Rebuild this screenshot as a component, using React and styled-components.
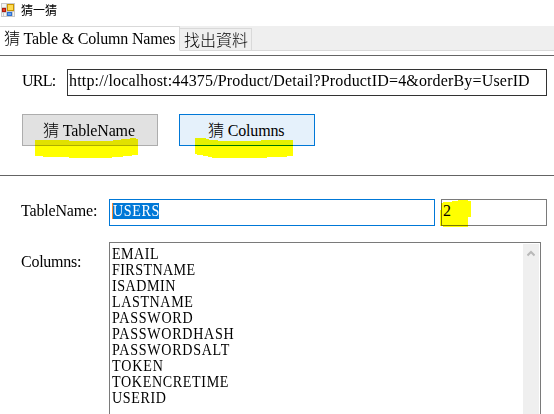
import React from "react";
import styled, { createGlobalStyle } from "styled-components";

const GlobalStyle = createGlobalStyle`
  * { box-sizing: border-box; }
  body { margin: 0; background: #fff; overflow: hidden; }
`;

const Window = styled.main`
  width: 554px;
  height: 414px;
  overflow: hidden;
  display: flex;
  flex-direction: column;
  background: #fff;
  color: #000;
  font: 300 16px/16px "Liberation Serif", "Noto Sans CJK TC", serif;
`;

const TitleBar = styled.header`
  height: 26px;
  flex: none;
  display: flex;
  align-items: flex-start;
  gap: 6px;
  padding: 3px 0 0 1px;
`;

const Title = styled.span`
  font: 400 12px/14px "Noto Sans CJK TC", sans-serif;
`;

const Text = styled.span`
  display: inline-block;
  white-space: pre;
  letter-spacing: ${(p) => p.$track || 0}px;
`;

const Caps = styled(Text)`
  transform: scaleX(0.88);
  transform-origin: left;
`;

const TabStrip = styled.nav`
  height: 25px;
  flex: none;
  display: flex;
  align-items: flex-end;
  background: #efefef;
  border-bottom: 1px solid #d9d9d9;
`;

const Tab = styled.div`
  width: ${(p) => p.$width}px;
  height: ${(p) => (p.$active ? 25 : 23)}px;
  margin-bottom: -1px;
  padding: 4px 0 0 4px;
  border: 1px solid #d9d9d9;
  border-left: 0;
  border-bottom-color: ${(p) => (p.$active ? "#fff" : "#d9d9d9")};
  background: ${(p) => (p.$active ? "#fff" : "#efefef")};
`;

const Section = styled.section`
  flex: none;
  height: ${(p) => p.$height}px;
  margin-top: ${(p) => p.$gap || 0}px;
  border-top: 1px solid #646464;
  padding: ${(p) => p.$pad};
`;

const Field = styled.div`
  display: flex;
  align-items: flex-start;
  margin-bottom: ${(p) => p.$after || 0}px;
`;

const Label = styled.label`
  width: ${(p) => p.$width}px;
  flex: none;
  padding-top: ${(p) => p.$top}px;
`;

const Input = styled.div`
  position: relative;
  width: ${(p) => p.$width}px;
  height: 27px;
  margin-right: 6px;
  padding: 3px 0 0 ${(p) => p.$inset || 1}px;
  border: 1px solid ${(p) => p.$line};
  background: #fff;
`;

const Selection = styled.div`
  width: 46px;
  height: 16px;
  box-shadow: -1px 0 #ff8c32;
  background: #0078d7;
  color: #fff;
`;

const ButtonRow = styled.div`
  display: flex;
  gap: 21px;
`;

const Button = styled.div`
  position: relative;
  width: 136px;
  height: 32px;
  padding: 8px 0 0 ${(p) => p.$inset}px;
  border: 1px solid ${(p) => (p.$focused ? "#0078d7" : "#adadad")};
  background: ${(p) => (p.$focused ? "#e5f1fb" : "#e1e1e1")};
`;

const Marker = styled.svg`
  position: absolute;
  left: ${(p) => p.$x}px;
  top: ${(p) => p.$y}px;
  mix-blend-mode: multiply;
  fill: #ff0;
`;

const List = styled.div`
  width: 432px;
  height: 190px;
  display: flex;
  justify-content: space-between;
  padding: 1px 1px 0 2px;
  border: 1px solid #7a7a7a;
`;

const Items = styled.div`
  display: flex;
  flex-direction: column;
  align-items: flex-start;
  padding-top: 2px;
`;

const ScrollTrack = styled.div`
  width: 16px;
  padding: 6px 0 0 4px;
  background: #efefef;
  line-height: 0;
`;

const columns = [
  ["EMAIL", 0.54],
  ["FIRSTNAME", 0.47],
  ["ISADMIN", 0.6],
  ["LASTNAME", 0.68],
  ["PASSWORD", 0.85],
  ["PASSWORDHASH", 0.82],
  ["PASSWORDSALT", 0.82],
  ["TOKEN", 0.95],
  ["TOKENCRETIME", 0.74],
  ["USERID", 0.72],
];

function AppIcon() {
  return (
    <svg width="14" height="14" viewBox="0 0 14 14" shapeRendering="crispEdges">
      <path fill="#c9c9c9" d="M0 0h14v14H0z" />
      <path fill="#f4f4f4" d="M1 1h4v3H1zM1 10h1v3H1zM3 10h2v3H3zM12 9h1v4h-1z" />
      <path fill="#b11b0d" d="M1 5h4v4H1z" />
      <path fill="#e5402a" d="M2 6h2v2H2z" />
      <path fill="#c99400" d="M6 1h7v7H6z" />
      <path fill="#ffdc52" d="M7 2h5v5H7z" />
      <path fill="#2d6fd0" d="M6 9h5v4H6z" />
      <path fill="#68a3ee" d="M7 10h3v2H7z" />
    </svg>
  );
}

export default function App() {
  return (
    <Window>
      <GlobalStyle />
      <TitleBar>
        <AppIcon />
        <Title>猜一猜</Title>
      </TitleBar>
      <TabStrip>
        <Tab $active $width={180}>
          <Text $track={-0.2}>猜 Table &amp; Column Names</Text>
        </Tab>
        <Tab $width={72}>
          <Text>找出資料</Text>
        </Tab>
      </TabStrip>
      <Section $gap={4} $height={120} $pad="13px 0 0 22px">
        <Field $after={18}>
          <Label $width={45} $top={4}>
            <Text $track={-0.75}>URL:</Text>
          </Label>
          <Input $width={480} $line="#333">
            <Text $track={0.17}>
              http://localhost:44375/Product/Detail?ProductID=4&amp;orderBy=UserID
            </Text>
          </Input>
        </Field>
        <ButtonRow>
          <Button $inset={20}>
            <Text $track={-0.15}>猜 TableName</Text>
            <Marker $x={12} $y={23} width="103" height="20">
              <path d="M0 2H34V3H78V2H86V1H95V0H101V1H103V17H97V18H88V19H77V20H34V19H8V18H0Z" />
            </Marker>
          </Button>
          <Button $focused $inset={28}>
            <Text $track={-0.15}>猜 Columns</Text>
            <Marker $x={15} $y={23} width="98" height="20">
              <path d="M0 0H11V1H14V2H23V3H66V2H98V18H92V19H72V20H17V19H13V18H8V17H2V16H0Z" />
            </Marker>
          </Button>
        </ButtonRow>
      </Section>
      <Section $height={239} $pad="23px 0 0 21px">
        <Field $after={16}>
          <Label $width={88} $top={4}>
            <Text $track={-0.18}>TableName:</Text>
          </Label>
          <Input $width={326} $line="#0078d7" $inset={3}>
            <Selection>
              <Caps $track={0.7}>USERS</Caps>
            </Selection>
          </Input>
          <Input $width={106} $line="#7a7a7a">
            <Text>2</Text>
            <Marker $x={-2} $y={0} width="31" height="27">
              <path d="M0 10H1V3H3V2H12V1H18V0H28V1H31V17H28V27H3V26H0Z" />
            </Marker>
          </Input>
        </Field>
        <Field>
          <Label $width={88} $top={12}>
            <Text $track={-0.25}>Columns:</Text>
          </Label>
          <List>
            <Items>
              {columns.map(([name, track]) => (
                <Caps key={name} $track={track}>
                  {name}
                </Caps>
              ))}
            </Items>
            <ScrollTrack>
              <svg width="8" height="7" viewBox="0 0 8 7" fill="none" stroke="#b8b8b8" strokeWidth="2">
                <path d="M.5 5.500 4 2l3.500 3.500" />
              </svg>
            </ScrollTrack>
          </List>
        </Field>
      </Section>
    </Window>
  );
}
